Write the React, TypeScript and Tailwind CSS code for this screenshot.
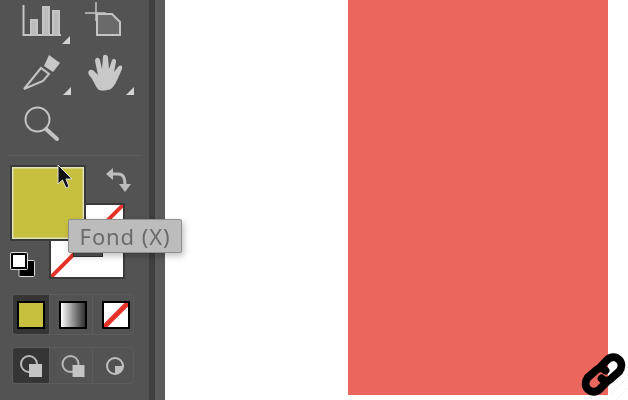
function Corner({ className }: { className: string }) {
  return (
    <svg className={className} width="8" height="8" viewBox="0 0 8 8">
      <path d="M8 0V8H0Z" fill="#d4d4d4" />
    </svg>
  )
}

function ToolIcons() {
  return (
    <svg width="149" height="146" viewBox="0 0 149 146" className="block" fill="none" stroke="#c4c4c4" strokeWidth="2">
      {/* graph */}
      <path d="M23.500 5V35H61" />
      <path d="M31 35V20H37V35M43 35V7H49V35M53 35V11H59V35" />
      <path d="M32 21h4v14h-4zM44 8h4v27h-4zM54 12h4v23h-4z" fill="#bcbcbc" stroke="none" />
      {/* artboard */}
      <path d="M96 2V21M85 13H106" strokeWidth="1.500" />
      <path d="M97 14H112L120 22V35H97Z" fill="#6a6a6a" />
      {/* pen */}
      <path d="M24 89L41 68L49 74L43 81Z" />
      <path d="M44 66L49 55L60 63L53 72Z" fill="#c8c8c8" stroke="none" />
      {/* hand */}
      <path
        d="M99 90C95 87 94 80 89 75C87 71 90 68 94 71L98 75L95 61C95 57 99 57 100 60L102 69L103 57C103 54 107 54 108 57L109 69L112 60C113 58 117 59 116 62L114 72L118 67C121 64 123 66 122 69C119 75 117 82 113 87C110 91 103 91 99 90Z"
        fill="#c8c8c8"
        stroke="none"
      />
      {/* magnifier */}
      <circle cx="37.500" cy="119.500" r="12" />
      <path d="M46 129L57 139" strokeWidth="4" strokeLinecap="round" />
    </svg>
  )
}

function ModeBtn({ active, width, children }: { active?: boolean; width: string; children: React.ReactNode }) {
  return (
    <div className={`${width} shrink-0 flex items-center justify-center ${active ? 'bg-[#353535]' : ''}`}>
      {children}
    </div>
  )
}

export default function App() {
  return (
    <div className="relative flex w-[628px] h-[400px] overflow-hidden bg-white">
      <aside className="relative w-[149px] shrink-0 bg-[#535353] blur-[0.5px]">
        <ToolIcons />
        <Corner className="absolute left-[62px] top-[36px]" />
        <Corner className="absolute left-[63px] top-[87px]" />
        <Corner className="absolute left-[126px] top-[87px]" />

        <div className="mx-[8px] mt-[9px] h-px bg-[#5e5e5e]" />

        {/* fill and stroke */}
        <div className="relative h-[128px]">
          <div className="absolute left-[49px] top-[47px] w-[76px] h-[76px] border-2 border-[#3a3a3a] bg-white overflow-hidden">
            <svg width="72" height="72" viewBox="0 0 72 72" className="block">
              <path d="M0 72L72 0" stroke="#e5332a" strokeWidth="4" />
            </svg>
            <div className="absolute left-[22px] top-[22px] w-[30px] h-[30px] bg-[#555] border border-[#333]" />
          </div>
          <div className="absolute left-[10px] top-[9px] w-[76px] h-[76px] border-2 border-[#3a3a3a] bg-[#c7c03f] shadow-[inset_0_0_0_1.5px_#e4e2b8]" />
          <svg className="absolute left-[105px] top-[11px]" width="26" height="28" viewBox="0 0 26 28" fill="none" stroke="#bdbdbd" strokeWidth="3">
            <path d="M5 7H13C18 7 20 10 20 19" />
            <path d="M1 7L8 1V13Z" fill="#bdbdbd" stroke="none" />
            <path d="M14 17H26L20 25Z" fill="#bdbdbd" stroke="none" />
          </svg>
          <svg className="absolute left-[10px] top-[96px]" width="26" height="26" viewBox="0 0 26 26">
            <rect x="9" y="8.500" width="15.500" height="16" rx="1" fill="#000" stroke="#ddd" strokeWidth="1" />
            <rect x="2" y="2" width="14" height="14" rx="1" fill="#fff" stroke="#000" strokeWidth="2" />
            <rect x="0.500" y="0.500" width="17" height="17" rx="1" fill="none" stroke="#ddd" strokeWidth="1" />
          </svg>
        </div>

        {/* color modes */}
        <div className="ml-[12px] mt-[10px] w-[122px] h-[41px] flex rounded-[4px] overflow-hidden border border-[#5c5c5c] divide-x divide-[#5c5c5c]">
          <ModeBtn active width="w-[37px]">
            <div className="w-[28px] h-[28px] border-2 border-black bg-[#c7c03f]" />
          </ModeBtn>
          <ModeBtn width="w-[43px]">
            <div className="ml-[4px] w-[28px] h-[28px] border-2 border-black bg-gradient-to-r from-white to-[#333]" />
          </ModeBtn>
          <ModeBtn width="w-[40px]">
            <div className="ml-[5px] w-[28px] h-[28px] border-2 border-black bg-white overflow-hidden">
              <svg width="24" height="24" viewBox="0 0 24 24" className="block">
                <path d="M0 24L24 0" stroke="#e5332a" strokeWidth="5" />
              </svg>
            </div>
          </ModeBtn>
        </div>

        {/* draw modes */}
        <div className="ml-[12px] mt-[12px] w-[122px] h-[37px] flex rounded-[4px] overflow-hidden border border-[#5c5c5c] divide-x divide-[#5c5c5c]">
          <ModeBtn active width="w-[37px]">
            <svg width="24" height="24" viewBox="0 0 24 24">
              <circle cx="10" cy="10" r="8" fill="none" stroke="#b8b8b8" strokeWidth="2" />
              <rect x="10" y="10" width="13" height="13" fill="#c4c4c4" />
            </svg>
          </ModeBtn>
          <ModeBtn width="w-[43px]">
            <svg width="28" height="24" viewBox="0 0 28 24">
              <circle cx="13.500" cy="10" r="8" fill="none" stroke="#b8b8b8" strokeWidth="2" />
              <rect x="15.500" y="11" width="12" height="12" fill="#c4c4c4" />
            </svg>
          </ModeBtn>
          <ModeBtn width="w-[40px]">
            <svg className="ml-[4px]" width="20" height="20" viewBox="0 0 20 20">
              <circle cx="10" cy="10" r="8" fill="#505050" stroke="#c0c0c0" strokeWidth="2" />
              <path d="M10 10H18A8 8 0 0 1 10 18Z" fill="#c0c0c0" />
            </svg>
          </ModeBtn>
        </div>
      </aside>

      {/* gutter */}
      <div className="w-[6px] shrink-0 bg-[#3f3f3f]" />
      <div className="w-[10px] shrink-0 bg-[#5a5a5a]" />

      {/* canvas */}
      <main className="relative flex-1 bg-white">
        <div className="ml-[183px] w-[260px] h-[395px] bg-[#eb665d]" />
        {/* watermark badge */}
        <svg className="absolute left-[411px] top-[340px]" width="52" height="60" viewBox="0 0 52 60" fill="none" stroke="#9a9a9a" strokeOpacity="0.12" strokeWidth="1">
          <path d="M0 55L10 45M0 49L16 33M8 49L24 33M14 55L34 35M24 55L52 27M34 55L52 37M40 60L52 48" />
        </svg>
        <svg className="absolute left-[416px] top-[352px]" width="45" height="45" viewBox="0 0 46 46" fill="none" stroke="#000" strokeWidth="8" strokeLinecap="round">
          <path d="M20 15L27 8C31 4 36 5 39 8C42 11 42 16 39 20L31 27C28 30 24 30 21 27" />
          <path d="M26 31L19 38C15 42 10 41 7 38C4 35 4 30 7 26L15 19C18 16 22 16 25 19" />
        </svg>
      </main>

      {/* tooltip + cursor */}
      <div className='absolute left-[68px] top-[219px] w-[114px] h-[34px] flex items-center justify-center pt-[1px] bg-[#bcbcbc] border border-[#8f8f8f] rounded-[2px] shadow-[2px_3px_6px_rgba(0,0,0,0.25)] text-[22px] text-[#6b6b6b] tracking-[0.9px] blur-[0.4px] [font-family:"Noto_Sans",sans-serif]'>
        Fond (X)
      </div>
      <svg className="absolute left-[56px] top-[164px] blur-[0.4px]" width="18" height="26" viewBox="0 0 18 26">
        <path d="M2 1V20L6.500 16L10 24L13 22.500L10 15H16Z" fill="#111" stroke="#ddd" strokeWidth="1" />
      </svg>
    </div>
  )
}
